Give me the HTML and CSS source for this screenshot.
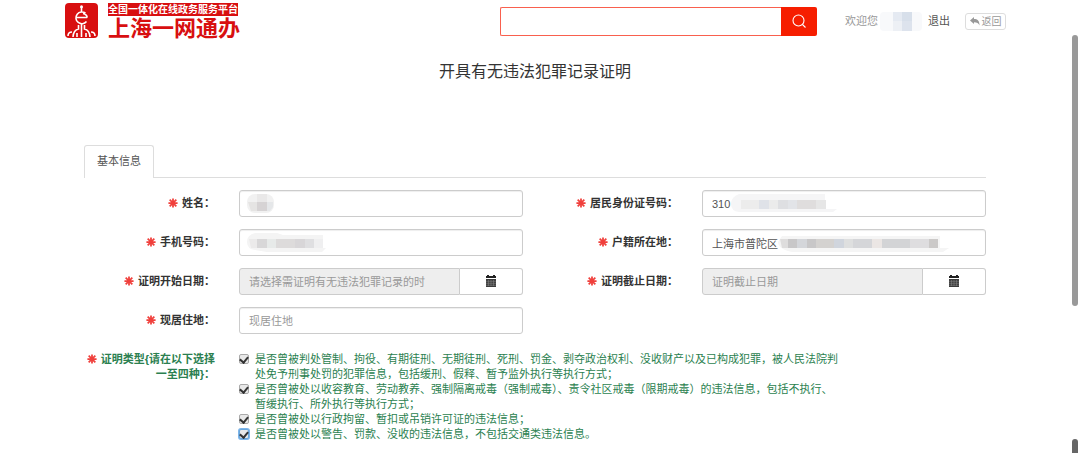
FILE: index.html
```html
<!DOCTYPE html>
<html lang="zh-CN">
<head>
<meta charset="utf-8">
<title>开具有无违法犯罪记录证明</title>
<link rel="stylesheet" href="styles.css">
</head>
<body>
<svg class="defs" aria-hidden="true">
  <symbol id="star" viewBox="0 0 12 12">
    <path d="M6 .5v11M.5 6h11M2 2l8 8M10 2L2 10" stroke="#f0403c" stroke-width="2.1" fill="none"/>
  </symbol>
  <symbol id="calendar" viewBox="0 0 12 12">
    <path d="M1 1h1V0h2v1h4V0h2v1h1v2H1z" fill="#222"/>
    <path d="M1 4h10v8H1z" fill="#3b3b3b"/>
    <path d="M1 6.3h10M1 8.3h10M1 10.3h10M3.5 5v6M6 5v6M8.5 5v6" stroke="#8b8b8b" stroke-width=".5"/>
  </symbol>
</svg>

<header class="header">
  <div class="brand">
    <svg class="brand-mark" viewBox="0 0 33 35" aria-hidden="true">
      <rect width="33" height="35" rx="4" fill="#d80f10"/>
      <g fill="none" stroke="#fff" stroke-width="1.6">
        <circle cx="16.5" cy="3.800" r="1.500" fill="#fff" stroke="none"/>
        <path d="M16.500 4v5M20.500 10.200A5.900 5.900 0 1 0 21.500 18.500M11 14.500h11.200M18 10.500q4 1 4.200 4"/>
        <path d="M16.500 21v13M13.500 22v4q-5 1-5.500 8M19.500 22v4q5 1 5.500 8M3 33q0-4 4-4M30 33q0-4-4-4M12 30v4M21 30v4"/>
      </g>
    </svg>
    <div class="brand-text">
      <span class="brand-tag">全国一体化在线政务服务平台</span>
      <span class="brand-name">上海一网通办</span>
    </div>
  </div>
  <form class="search">
    <input class="search-input" type="text" aria-label="搜索">
    <button class="search-button" type="button" aria-label="搜索">
      <svg width="16" height="16" viewBox="0 0 16 16" fill="none" stroke="#fff" stroke-width="1.1"><circle cx="7.5" cy="7.5" r="5.500"/><path d="M11.5 11.5l3 3"/></svg>
    </button>
  </form>
  <div class="account">
    <span class="welcome">欢迎您</span>
    <svg class="account-mask" width="42" height="19" viewBox="0 0 42 19" aria-hidden="true">
      <rect width="42" height="19" rx="4" fill="#f8f9fb"/>
      <path d="M13 0h9v9h-9z" fill="#e5eaf2"/><path d="M22 0h10v9H22z" fill="#d7dfea"/>
      <path d="M13 9h9v10h-9z" fill="#edf0f5"/><path d="M22 9h10v10H22z" fill="#dde3ed"/>
    </svg>
    <a class="logout" href="#">退出</a>
    <button class="back" type="button">
      <svg width="10" height="9" viewBox="0 0 10 9" aria-hidden="true"><path d="M0 3.500L4 0v2c3.500 0 5.500 1.500 5.500 6.500C8.500 6 7 5.200 4 5.200V7z" fill="#999"/></svg>
      返回
    </button>
  </div>
</header>

<main class="main">
  <h1 class="title">开具有无违法犯罪记录证明</h1>
  <nav class="tabs"><a class="tab" href="#basic">基本信息</a></nav>

  <form class="form" id="basic">
    <div class="field">
      <label class="label" for="name"><svg class="star"><use href="#star"/></svg>姓名：</label>
      <div class="control">
        <input class="input" id="name" type="text">
        <svg class="mask" width="27" height="19" viewBox="0 0 27 19" aria-hidden="true">
          <rect width="27" height="19" rx="8" fill="#f1f1f1"/>
          <path d="M10 0h10v8H10z" fill="#e9e8e8"/><path d="M1 8h9v9H4z" fill="#e5e4e3"/><path d="M10 8h10v9H10z" fill="#d6d3d4"/><path d="M20 8h6v5l-3 4h-3z" fill="#e5e7e9"/>
        </svg>
      </div>
    </div>
    <div class="field">
      <label class="label" for="idcard"><svg class="star"><use href="#star"/></svg>居民身份证号码：</label>
      <div class="control">
        <input class="input" id="idcard" type="text" value="310">
        <svg class="mask mask-id" width="108" height="19" viewBox="0 0 108 19" aria-hidden="true">
          <path d="M8 0h86v15h12l-4 3H8Q0 17 0 10T8 0z" fill="#f5f5f6"/>
          <path d="M10 6h9v9h-9zM19 6h9v9h-9z" fill="#ececec"/><path d="M28 6h10v9H28z" fill="#dfe2e8"/><path d="M38 6h9v9h-9z" fill="#ebebeb"/><path d="M47 6h10v9H47z" fill="#dedfe2"/><path d="M57 6h9v9h-9z" fill="#e2e4e8"/><path d="M66 6h19v9H66z" fill="#dfdddd"/><path d="M85 6h10v9H85z" fill="#e6e6e6"/>
        </svg>
      </div>
    </div>
    <div class="field">
      <label class="label" for="phone"><svg class="star"><use href="#star"/></svg>手机号码：</label>
      <div class="control">
        <input class="input" id="phone" type="text">
        <svg class="mask" width="80" height="19" viewBox="0 0 80 19" aria-hidden="true">
          <path d="M8 0h22l6 2h40v13h3l-4 4H20L8 17Q0 16 0 9T8 0z" fill="#f4f4f4"/>
          <path d="M2 6h8v9H4z" fill="#ebeaea"/><path d="M10 6h10v9H10z" fill="#d8d7d8"/><path d="M20 6h9v9h-9z" fill="#e7eae9"/><path d="M29 6h19v9H29z" fill="#dddbdb"/><path d="M48 6h10v9H48z" fill="#d8d6d8"/><path d="M58 6h9v9h-9z" fill="#dfdfe1"/><path d="M67 6h9v9h-9z" fill="#efeff0"/>
        </svg>
      </div>
    </div>
    <div class="field">
      <label class="label" for="domicile"><svg class="star"><use href="#star"/></svg>户籍所在地：</label>
      <div class="control">
        <input class="input" id="domicile" type="text" value="上海市普陀区">
        <svg class="mask mask-home" width="172" height="19" viewBox="0 0 172 19" aria-hidden="true">
          <path d="M4 3h158v12h9l-6 4H14Q0 16 0 9z" fill="#f5f5f5"/>
          <path d="M2 6h8v9H4z" fill="#dedddd"/><path d="M10 6h9v9h-9zM29 6h9v9h-9z" fill="#c8c7c8"/><path d="M19 6h10v9H19z" fill="#d4d6da"/><path d="M38 6h18v9H38z" fill="#d4d2d0"/><path d="M56 6h10v9H56z" fill="#d0d5dd"/><path d="M66 6h9v9h-9z" fill="#dedfdf"/><path d="M75 6h19v9H75z" fill="#d5d6d9"/><path d="M94 6h10v9H94z" fill="#ebe6e4"/><path d="M104 6h28v9h-28z" fill="#d3d4d6"/><path d="M132 6h19v9h-19z" fill="#dedddf"/><path d="M151 6h9v9h-9z" fill="#cbc9c8"/>
        </svg>
      </div>
    </div>
    <div class="field">
      <label class="label" for="start"><svg class="star"><use href="#star"/></svg>证明开始日期：</label>
      <div class="control">
        <input class="input input-date" id="start" type="text" placeholder="请选择需证明有无违法犯罪记录的时" readonly>
        <button class="date-button" type="button" aria-label="选择开始日期"><svg width="12" height="12"><use href="#calendar"/></svg></button>
      </div>
    </div>
    <div class="field">
      <label class="label" for="end"><svg class="star"><use href="#star"/></svg>证明截止日期：</label>
      <div class="control">
        <input class="input input-date" id="end" type="text" placeholder="证明截止日期" readonly>
        <button class="date-button" type="button" aria-label="选择截止日期"><svg width="12" height="12"><use href="#calendar"/></svg></button>
      </div>
    </div>
    <div class="field">
      <label class="label" for="address"><svg class="star"><use href="#star"/></svg>现居住地：</label>
      <div class="control"><input class="input" id="address" type="text" placeholder="现居住地"></div>
    </div>

    <div class="types" role="group" aria-labelledby="types-label">
      <div class="label label-types" id="types-label"><svg class="star"><use href="#star"/></svg>证明类型{请在以下选择<br>一至四种}：</div>
      <div class="options">
        <label class="option"><input class="check" type="checkbox" checked><span>是否曾被判处管制、拘役、有期徒刑、无期徒刑、死刑、罚金、剥夺政治权利、没收财产以及已构成犯罪，被人民法院判处免予刑事处罚的犯罪信息，包括缓刑、假释、暂予监外执行等执行方式；</span></label>
        <label class="option"><input class="check" type="checkbox" checked><span>是否曾被处以收容教育、劳动教养、强制隔离戒毒（强制戒毒）、责令社区戒毒（限期戒毒）的违法信息，包括不执行、暂缓执行、所外执行等执行方式；</span></label>
        <label class="option"><input class="check" type="checkbox" checked><span>是否曾被处以行政拘留、暂扣或吊销许可证的违法信息；</span></label>
        <label class="option"><input class="check check-focus" type="checkbox" checked><span>是否曾被处以警告、罚款、没收的违法信息，不包括交通类违法信息。</span></label>
      </div>
    </div>
  </form>
</main>
<div class="scroll-thumb"></div>
<div class="scroll-thumb scroll-thumb-outer"></div>
</body>
</html>
```
FILE: styles.css
```css
* {
  box-sizing: border-box;
}

body {
  margin: 0;
  position: relative;
  min-height: 100vh;
  overflow: hidden;
  background: #fff;
  color: #333;
  font: 11px/15px "Liberation Sans", "Noto Sans CJK SC", sans-serif;
}

input,
button {
  font: inherit;
  color: inherit;
}

a {
  color: inherit;
  text-decoration: none;
}

.defs {
  position: absolute;
  width: 0;
  height: 0;
}

.header {
  display: flex;
  align-items: center;
  height: 42px;
  padding: 0 74px 0 65px;
}

.brand {
  display: flex;
  gap: 10px;
  height: 36px;
}

.brand-mark {
  width: 33px;
  height: 35px;
}

.brand-text {
  display: flex;
  flex-direction: column;
  font-weight: bold;
  white-space: nowrap;
}

.brand-tag {
  width: 130px;
  height: 13px;
  background: #d80f10;
  color: #fff;
  font-size: 10px;
  line-height: 13px;
  text-align: center;
}

.brand-name {
  color: #d80f10;
  font-size: 22px;
  line-height: 25px;
}

.search {
  display: flex;
  width: 317px;
  height: 29px;
  margin-left: auto;
}

.search-input {
  flex: 1;
  min-width: 0;
  padding: 0 10px;
  border: 1px solid #f9604e;
  border-right: 0;
  border-radius: 2px 0 0 2px;
  outline: 0;
}

.search-button {
  display: grid;
  place-items: center;
  width: 36px;
  padding: 0;
  border: 0;
  border-radius: 0 2px 2px 0;
  background: #f61e00;
}

.account {
  display: flex;
  align-items: center;
  margin-left: 28px;
  color: #999;
  white-space: nowrap;
}

.account-mask {
  margin-left: 2px;
}

.logout {
  margin-left: 6px;
  color: #555;
}

.back {
  display: flex;
  align-items: center;
  justify-content: center;
  gap: 2px;
  width: 41px;
  height: 17px;
  margin-left: 15px;
  padding: 0;
  border: 1px solid #ddd;
  border-radius: 3px;
  background: #fff;
  color: #999;
  font-size: 10px;
  line-height: 15px;
}

.main {
  padding: 0 94px 0 84px;
}

.title {
  margin: 18px 0 61px;
  font-size: 16px;
  font-weight: normal;
  line-height: 24px;
  text-align: center;
}

.tabs {
  display: flex;
  height: 33px;
  border-bottom: 1px solid #ddd;
}

.tab {
  height: 33px;
  padding: 8px 12px;
  border: 1px solid #ddd;
  border-bottom: 0;
  border-radius: 3px 3px 0 0;
  background: #fff;
  color: #555;
}

.form {
  display: grid;
  grid-template-columns: 1fr 1fr;
  gap: 12px 24px;
  padding-top: 12px;
}

.field,
.types {
  display: grid;
  grid-template-columns: 131px 1fr;
  column-gap: 24px;
}

.label {
  padding-top: 6px;
  font-weight: bold;
  text-align: right;
}

.star {
  width: 10px;
  height: 10px;
  margin-right: 4px;
  vertical-align: -1px;
}

.control {
  position: relative;
  display: flex;
}

.input {
  flex: 1;
  min-width: 0;
  height: 27px;
  padding: 0 9px;
  border: 1px solid #ccc;
  border-radius: 3px;
  background: #fff;
  box-shadow: inset 0 1px 1px #eee;
  color: #555;
}

.input::placeholder {
  color: #999;
  opacity: 1;
}

.input-date {
  border-radius: 3px 0 0 3px;
  background: #eee;
}

.date-button {
  display: grid;
  place-items: center;
  width: 63px;
  padding: 0 0 2px;
  border: 1px solid #ccc;
  border-left: 0;
  border-radius: 0 3px 3px 0;
  background: #fff;
}

.mask {
  position: absolute;
  left: 8px;
  top: 4px;
}

.mask-id {
  left: 29px;
}

.mask-home {
  left: 76px;
}

.types {
  grid-column: 1 / -1;
  color: #2b7f50;
}

.label-types {
  white-space: nowrap;
}

.options {
  max-width: 604px;
  padding-top: 6px;
}

.option {
  display: flex;
  gap: 6px;
}

.check {
  appearance: none;
  display: grid;
  place-items: center;
  flex: none;
  width: 10px;
  height: 10px;
  margin: 2px 0 0;
  border: 1px solid #aaa;
  border-radius: 2px;
  background: #e8e8e8;
}

.check:checked::before {
  content: "";
  width: 4px;
  height: 6px;
  margin-bottom: 2px;
  border: solid #333;
  border-width: 0 2px 2px 0;
  transform: rotate(40deg);
}

.check-focus {
  border-color: #69a7dd;
  box-shadow: 0 0 0 1px #7db5ea;
}

.scroll-thumb {
  position: absolute;
  top: 35px;
  right: 2px;
  width: 6px;
  height: 271px;
  border-radius: 3px;
  background: #999;
}

.scroll-thumb-outer {
  top: 439px;
  height: 20px;
  background: #666;
}
```
